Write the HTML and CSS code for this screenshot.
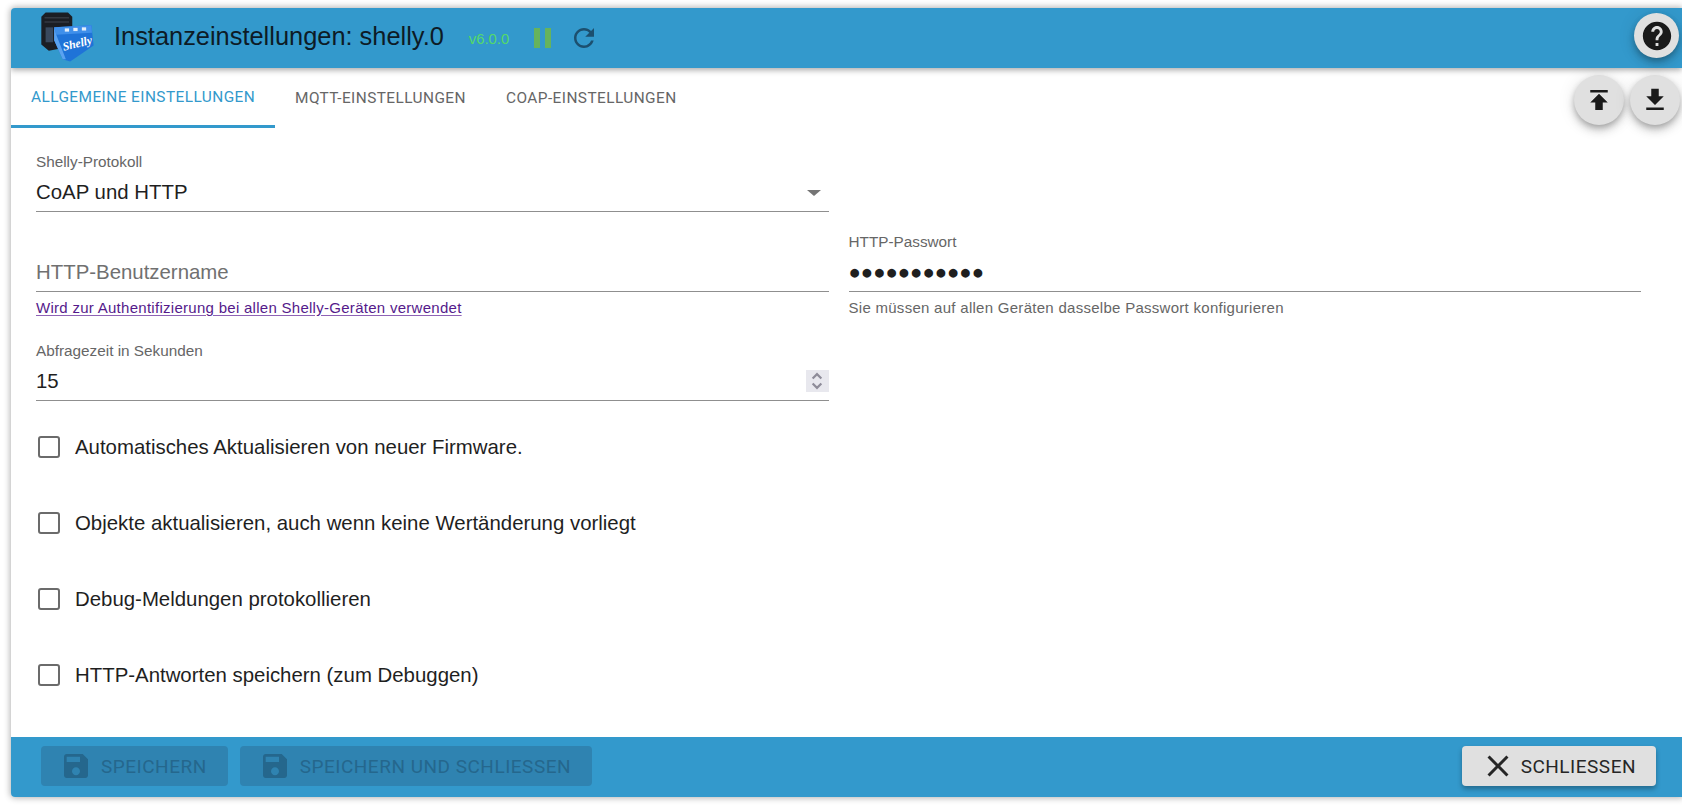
FILE: index.html
```html
<!DOCTYPE html>
<html lang="de">
<head>
<meta charset="utf-8">
<title>Instanzeinstellungen: shelly.0</title>
<link rel="stylesheet" href="styles.css">
</head>
<body>
<div class="dialog">
  <header class="topbar">
    <svg class="logo" viewBox="0 0 56 60" width="60" height="64" aria-hidden="true">
      <path d="M3 10 L7 6 L28 6 L32 10 L32 22 L26 39 L10 42 L3 36 Z" fill="#1b1e24"/>
      <path d="M6 11 L29 11 M6 15 L29 15" stroke="#343941" stroke-width="1.5" fill="none"/>
      <rect x="7" y="20" width="7" height="14" fill="#39495e"/>
      <path d="M15 20 L50 18 L52 37 L30 52 L23 50 L15 32 Z" fill="#1f73d8"/>
      <path d="M15 20 L50 18 L50.5 25 L17 27 Z" fill="#3f8fea"/>
      <path d="M15 20 L17 27 L26 50 L23 50 L15 32 Z" fill="#5aa2f0"/>
      <rect x="25" y="21" width="4" height="3" fill="#e4eef9"/><rect x="33" y="20.5" width="4" height="3" fill="#e4eef9"/><rect x="41" y="20" width="4" height="3" fill="#e4eef9"/>
      <text class="logo-text" x="24" y="42" transform="rotate(-14 24 42)">Shelly</text>
    </svg>
    <h1 class="title">Instanzeinstellungen: shelly.0</h1>
    <span class="version">v6.0.0</span>
    <svg class="pause" viewBox="0 0 18 20" width="18" height="20" aria-hidden="true"><rect x="0" y="0" width="6" height="20"/><rect x="11" y="0" width="6" height="20"/></svg>
    <svg class="reload" viewBox="0 0 24 24" width="30" height="30" aria-hidden="true"><path d="M17.65 6.35C16.2 4.9 14.21 4 12 4c-4.42 0-7.99 3.58-7.99 8s3.57 8 7.99 8c3.73 0 6.84-2.55 7.73-6h-2.08c-.82 2.33-3.04 4-5.65 4-3.31 0-6-2.69-6-6s2.69-6 6-6c1.66 0 3.14.69 4.22 1.78L13 11h7V4l-2.35 2.35z"/></svg>
    <button class="fab fab-help" type="button" aria-label="Hilfe">
      <svg viewBox="0 0 24 24" width="34" height="34"><path d="M12 2C6.48 2 2 6.48 2 12s4.48 10 10 10 10-4.48 10-10S17.52 2 12 2zm1 17h-2v-2h2v2zm2.07-7.75l-.9.92C13.45 12.9 13 13.5 13 15h-2v-.5c0-1.1.45-2.1 1.17-2.83l1.24-1.26c.37-.36.59-.86.59-1.41 0-1.1-.9-2-2-2s-2 .9-2 2H8c0-2.21 1.79-4 4-4s4 1.79 4 4c0 .88-.36 1.68-.93 2.25z"/></svg>
    </button>
  </header>

  <main class="content">
    <nav class="tabs">
      <a class="tab tab-active">Allgemeine Einstellungen</a>
      <a class="tab">MQTT-Einstellungen</a>
      <a class="tab">COAP-Einstellungen</a>
    </nav>
    <button class="fab fab-up" type="button" aria-label="Hochladen">
      <svg viewBox="0 0 24 24" width="30" height="30"><path d="M5 4v2h14V4H5zm0 10h4v6h6v-6h4l-7-7-7 7z"/></svg>
    </button>
    <button class="fab fab-down" type="button" aria-label="Herunterladen">
      <svg viewBox="0 0 24 24" width="30" height="30"><path d="M19 9h-4V3H9v6H5l7 7 7-7zM5 18v2h14v-2H5z"/></svg>
    </button>

    <form class="form">
      <div class="row row-select">
        <div class="field">
          <label class="label">Shelly-Protokoll</label>
          <div class="control"><span class="value">CoAP und HTTP</span><span class="caret"></span></div>
        </div>
      </div>
      <div class="row row-http">
        <div class="field">
          <div class="control control-empty"><span class="placeholder">HTTP-Benutzername</span></div>
          <a class="help help-link">Wird zur Authentifizierung bei allen Shelly-Geräten verwendet</a>
        </div>
        <div class="field">
          <label class="label">HTTP-Passwort</label>
          <div class="control"><span class="value dots">●●●●●●●●●●●</span></div>
          <span class="help">Sie müssen auf allen Geräten dasselbe Passwort konfigurieren</span>
        </div>
      </div>
      <div class="row row-poll">
        <div class="field">
          <label class="label">Abfragezeit in Sekunden</label>
          <div class="control"><span class="value">15</span>
            <span class="spinner"><svg viewBox="0 0 10 16" width="14" height="20" aria-hidden="true"><path d="M1.5 6 L5 2.5 L8.5 6 M1.5 10 L5 13.5 L8.5 10" fill="none" stroke="#8e8c99" stroke-width="1.7"/></svg></span>
          </div>
        </div>
      </div>
      <div class="checks">
        <label class="check"><span class="box"></span>Automatisches Aktualisieren von neuer Firmware.</label>
        <label class="check"><span class="box"></span>Objekte aktualisieren, auch wenn keine Wertänderung vorliegt</label>
        <label class="check"><span class="box"></span>Debug-Meldungen protokollieren</label>
        <label class="check"><span class="box"></span>HTTP-Antworten speichern (zum Debuggen)</label>
      </div>
    </form>
  </main>

  <footer class="bottombar">
    <button class="btn btn-disabled" type="button">
      <svg viewBox="0 0 24 24" width="32" height="32" aria-hidden="true"><path d="M17 3H5c-1.11 0-2 .9-2 2v14c0 1.1.89 2 2 2h14c1.1 0 2-.9 2-2V7l-4-4zm-5 16c-1.66 0-3-1.34-3-3s1.34-3 3-3 3 1.34 3 3-1.34 3-3 3zm3-10H5V5h10v4z"/></svg>
      Speichern
    </button>
    <button class="btn btn-disabled" type="button">
      <svg viewBox="0 0 24 24" width="32" height="32" aria-hidden="true"><path d="M17 3H5c-1.11 0-2 .9-2 2v14c0 1.1.89 2 2 2h14c1.1 0 2-.9 2-2V7l-4-4zm-5 16c-1.66 0-3-1.34-3-3s1.34-3 3-3 3 1.34 3 3-1.34 3-3 3zm3-10H5V5h10v4z"/></svg>
      Speichern und schliessen
    </button>
    <button class="btn btn-close" type="button">
      <svg viewBox="0 0 24 24" width="36" height="36" aria-hidden="true"><path d="M19 6.41 17.59 5 12 10.59 6.41 5 5 6.41 10.59 12 5 17.59 6.41 19 12 13.41 17.59 19 19 17.59 13.41 12z"/></svg>
      Schliessen
    </button>
  </footer>
</div>
</body>
</html>
```
FILE: styles.css
```css
* { box-sizing: border-box; }
html, body { height: 100%; }
body {
  margin: 0;
  padding: 8px 0 8px 11px;
  background: #fff;
  font-family: "Liberation Sans", Arial, sans-serif;
  color: #1f1f1f;
  overflow: hidden;
}
.dialog {
  height: 789px;
  display: flex;
  flex-direction: column;
  background: #fff;
  border-radius: 4px 0 0 4px;
  box-shadow: 0 0 6px 1px rgba(0,0,0,.3);
  overflow: hidden;
}
.topbar {
  position: relative;
  z-index: 2;
  flex: 0 0 60px;
  display: flex;
  align-items: center;
  background: #3399cc;
  box-shadow: 0 2px 6px rgba(0,0,0,.35);
  padding-left: 27px;
}
.logo { flex: none; margin: -2px 0; }
.logo-text {
  font-family: "Liberation Serif", serif;
  font-style: italic;
  font-weight: 700;
  font-size: 11px;
  fill: #fff;
}
.title {
  margin: 0 0 3px 16px;
  font-size: 25.4px;
  font-weight: 400;
  color: #0d1b26;
  white-space: nowrap;
}
.version {
  margin: 2px 0 0 25px;
  font-size: 14.8px;
  color: #55d96a;
}
.pause { margin-left: 25px; fill: #66b35c; }
.reload { margin-left: 17px; fill: #1c4f6e; }
.fab {
  position: absolute;
  border: 0;
  padding: 0;
  border-radius: 50%;
  background: #e0e0e0;
  color: #1a1a1a;
  display: flex;
  align-items: center;
  justify-content: center;
  box-shadow: 0 3px 6px -1px rgba(0,0,0,.25), 0 6px 10px rgba(0,0,0,.14), 0 1px 18px rgba(0,0,0,.1);
}
.fab svg { fill: currentColor; }
.fab-help { right: 3px; top: 5px; width: 45px; height: 45px; }
.fab-up { right: 58px; top: 7px; width: 50px; height: 50px; }
.fab-down { right: 2px; top: 7px; width: 50px; height: 50px; }
.content {
  position: relative;
  flex: 1;
  min-height: 0;
}
.tabs { display: flex; height: 60px; }
.tab {
  padding: 0 20px;
  display: flex;
  align-items: center;
  font-family: Roboto, sans-serif;
  font-size: 15.4px;
  letter-spacing: .44px;
  text-transform: uppercase;
  color: #666;
  white-space: nowrap;
}
.tab-active {
  width: 264px;
  color: #3399cc;
  border-bottom: 3px solid #3399cc;
}
.form { padding: 25px 41px 0 25px; }
.row {
  display: grid;
  grid-template-columns: 1fr 1fr;
  column-gap: 20px;
}
.row-select { height: 80px; }
.row-http { height: 109px; }
.row-poll { height: 67px; }
.field { display: flex; flex-direction: column; }
.label {
  display: block;
  height: 17px;
  line-height: 17px;
  font-size: 15.3px;
  color: #666;
}
.control {
  height: 42px;
  padding-top: 4px;
  display: flex;
  align-items: center;
  justify-content: space-between;
  border-bottom: 1px solid #8f8f8f;
}
.control-empty { margin-top: 17px; }
.value { font-size: 20.4px; color: #1f1f1f; }
.dots { font-size: 20.4px; letter-spacing: 0; }
.placeholder { font-size: 20.4px; color: #707070; }
.caret {
  width: 0;
  height: 0;
  margin-right: 8px;
  border-left: 7px solid transparent;
  border-right: 7px solid transparent;
  border-top: 6px solid #757575;
}
.spinner {
  width: 23px;
  height: 22px;
  margin-top: -2px;
  display: flex;
  align-items: center;
  justify-content: center;
  background: #e8e8ee;
}
.help {
  margin-top: 8px;
  line-height: 16px;
  font-size: 15px;
  letter-spacing: .28px;
  color: #666;
}
.help-link {
  color: #551a8b;
  text-decoration: underline;
  text-decoration-color: #8e62b5;
  text-underline-offset: 2px;
}
.checks { display: flex; flex-direction: column; }
.check {
  height: 76px;
  display: flex;
  align-items: center;
  font-size: 20.4px;
  color: #1f1f1f;
}
.box {
  width: 22px;
  height: 22px;
  margin: 0 15px 0 2px;
  border: 2.5px solid #6b6b6b;
  border-radius: 3px;
}
.bottombar {
  flex: 0 0 60px;
  display: flex;
  align-items: center;
  gap: 12px;
  padding: 0 26px 2px 30px;
  background: #3399cc;
}
.btn {
  height: 40px;
  display: flex;
  align-items: center;
  gap: 9px;
  padding: 0 21px 0 19px;
  border: 0;
  border-radius: 4px;
  font-family: Roboto, sans-serif;
  font-size: 19px;
  text-transform: uppercase;
  letter-spacing: .5px;
}
.btn svg { fill: currentColor; flex: none; }
.btn-disabled { color: #25678d; background: #2f83b1; }
.btn-close {
  margin-left: auto;
  gap: 5px;
  padding: 0 20px 0 18px;
  background: #e0e0e0;
  color: #262626;
  box-shadow: 0 3px 5px rgba(0,0,0,.3);
}
```
